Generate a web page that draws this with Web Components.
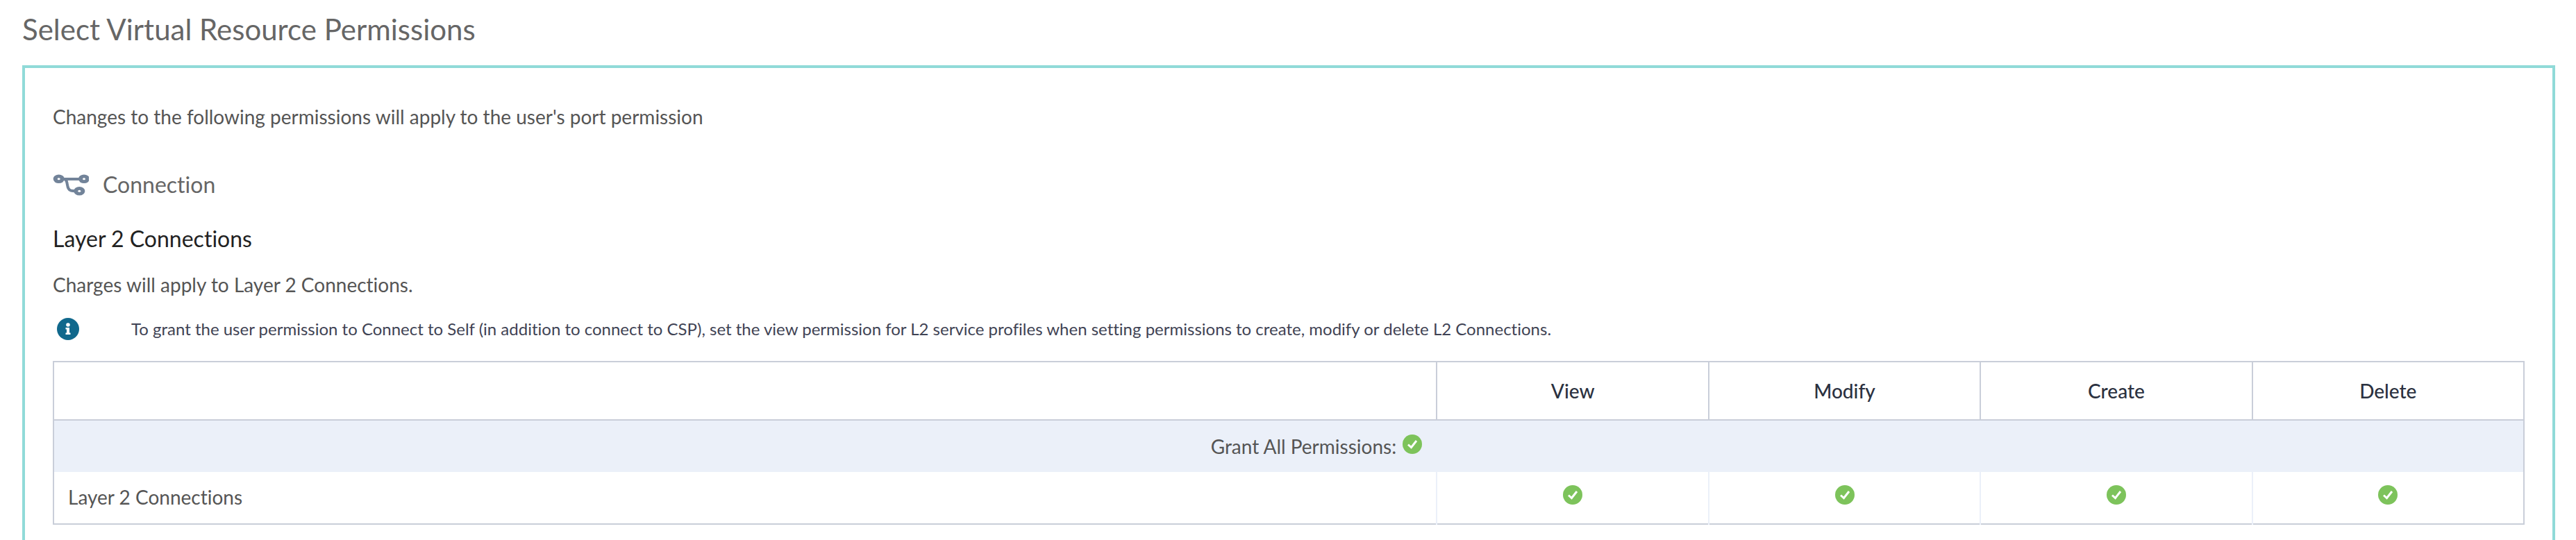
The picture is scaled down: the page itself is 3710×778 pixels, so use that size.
<!DOCTYPE html>
<html lang="en">
<head>
<meta charset="utf-8">
<title>Select Virtual Resource Permissions</title>
<style>
body { margin: 0; background: #fff; color: #555; font-family: Lato, "Open Sans", sans-serif; font-size: 28px; line-height: 36px; font-variant-ligatures: none; }
</style>
</head>
<body>
<permissions-page heading="Select Virtual Resource Permissions">
  <p slot="intro">Changes to the following permissions will apply to the user's port permission</p>
  <section-title>Connection</section-title>
  <permission-group heading="Layer 2 Connections">
    <span slot="charges">Charges will apply to Layer 2 Connections.</span>
    <info-note>To grant the user permission to Connect to Self (in addition to connect to CSP), set the view permission for L2 service profiles when setting permissions to create, modify or delete L2 Connections.</info-note>
    <permission-table resource="Layer 2 Connections" actions="View,Modify,Create,Delete"></permission-table>
  </permission-group>
</permissions-page>

<template id="page">
  <style>
    :host { display: block; padding: 0 30px 0 32px; }
    h1 { margin: 0; padding: 16px 0 26px; font-size: 42px; line-height: 52px; font-weight: 400; color: #666; }
    main { border: 4px solid #90dad8; padding: 52px 40px 24px; }
    ::slotted(p) { margin: 0 0 60px; }
  </style>
  <h1></h1>
  <main><slot name="intro"></slot><slot></slot></main>
</template>

<template id="section">
  <style>
    :host { display: block; color: #666; font-size: 32px; line-height: 40px; }
    h2 { display: flex; align-items: center; gap: 20px; margin: 0; font: inherit; }
    svg { width: 52px; height: 32px; flex: none; }
  </style>
  <h2>
    <svg viewBox="0 0 52 32" fill="none" aria-hidden="true">
      <g stroke="#728399" stroke-width="4">
        <path d="M14 8H40"/>
        <path d="M17 8.500C21.500 9 20 17 22.500 21.500C24.500 25 27 25.300 33 25.300"/>
      </g>
      <g fill="#728399">
        <ellipse cx="8.700" cy="7.700" rx="8" ry="6.300"/>
        <ellipse cx="45" cy="7.700" rx="8" ry="6.300"/>
        <ellipse cx="38.300" cy="25.300" rx="8" ry="6.300"/>
      </g>
      <g fill="#fff">
        <ellipse cx="8.700" cy="7.700" rx="2" ry="1.500"/>
        <ellipse cx="45" cy="7.700" rx="2" ry="1.500"/>
        <ellipse cx="38.300" cy="25.300" rx="2" ry="1.500"/>
      </g>
    </svg>
    <span><slot></slot></span>
  </h2>
</template>

<template id="group">
  <style>
    :host { display: block; }
    h3 { margin: 38px 0 28px; font-size: 32px; line-height: 40px; font-weight: 400; color: #222; }
    p { margin: 0 0 30px; }
  </style>
  <h3></h3>
  <p><slot name="charges"></slot></p>
  <slot></slot>
</template>

<template id="note">
  <style>
    :host { display: flex; align-items: center; gap: 75px; padding-left: 6px; margin-bottom: 30px; font-size: 24px; line-height: 32px; color: #3f4354; }
    svg { width: 32px; height: 32px; flex: none; }
  </style>
  <svg viewBox="0 0 32 32" role="img" aria-label="Information">
    <circle cx="16" cy="16" r="16" fill="#10688c"/>
    <circle cx="16" cy="10" r="2.800" fill="#fff"/>
    <path d="M12.500 14H18V21.500H19.500V24H12.500V21.500H14V16.500H12.500Z" fill="#fff"/>
  </svg>
  <span><slot></slot></span>
</template>

<template id="check">
  <style>
    :host { display: inline-grid; width: 28px; height: 28px; }
    input, svg { grid-area: 1 / 1; width: 28px; height: 28px; }
    input { appearance: none; margin: 0; border-radius: 50%; background: #c9ced9; cursor: pointer; }
    input:checked { background: #7dc35b; }
    svg { pointer-events: none; }
  </style>
  <input type="checkbox" checked>
  <svg viewBox="0 0 28 28" fill="none" stroke="#fff" stroke-width="3" aria-hidden="true"><path d="M8 14.500L12.500 18.500L20 9"/></svg>
</template>

<template id="table">
  <style>
    :host { display: block; }
    table { width: 100%; table-layout: fixed; border-collapse: collapse; border: 2px solid #c9ced9; }
    th, td { box-sizing: border-box; padding: 0 20px; text-align: center; }
    th { font-weight: 500; color: #2b3140; }
    thead > tr > * { height: 84px; border: 2px solid #c9ced9; width: 11%; }
    thead > tr > :first-child { width: 56%; }
    .all td { height: 75px; padding-left: 100px; background: #ebf0f9; }
    .all check-toggle { margin-left: 2px; }
    .row > * { height: 75px; padding-bottom: 2px; border-left: 2px solid #ebf0f9; }
    .row > th { border-left-color: #c9ced9; text-align: left; font-weight: 400; color: #555; }
  </style>
  <table>
    <thead><tr><td></td></tr></thead>
    <tbody>
      <tr class="all"><td>Grant All Permissions: <check-toggle label="Grant all permissions"></check-toggle></td></tr>
      <tr class="row"><th scope="row"></th></tr>
    </tbody>
  </table>
</template>

<script>
class Base extends HTMLElement {
  constructor() {
    super();
    const source = document.getElementById(this.constructor.template);
    this.attachShadow({ mode: 'open' }).append(source.content.cloneNode(true));
  }
  find(selector) { return this.shadowRoot.querySelector(selector); }
}
customElements.define('check-toggle', class extends Base {
  static template = 'check';
  connectedCallback() { this.find('input').setAttribute('aria-label', this.getAttribute('label')); }
});
customElements.define('section-title', class extends Base { static template = 'section'; });
customElements.define('info-note', class extends Base { static template = 'note'; });
customElements.define('permission-group', class extends Base {
  static template = 'group';
  connectedCallback() { this.find('h3').textContent = this.getAttribute('heading'); }
});
customElements.define('permission-table', class extends Base {
  static template = 'table';
  connectedCallback() {
    const resource = this.getAttribute('resource');
    const actions = this.getAttribute('actions').split(',');
    this.find('.all td').colSpan = actions.length + 1;
    this.find('.row th').textContent = resource;
    for (const action of actions) {
      const head = document.createElement('th');
      head.scope = 'col';
      head.textContent = action;
      this.find('thead tr').append(head);
      const toggle = document.createElement('check-toggle');
      toggle.setAttribute('label', `${action} ${resource}`);
      this.find('.row').insertCell().append(toggle);
    }
  }
});
customElements.define('permissions-page', class extends Base {
  static template = 'page';
  connectedCallback() { this.find('h1').textContent = this.getAttribute('heading'); }
});
</script>
</body>
</html>
